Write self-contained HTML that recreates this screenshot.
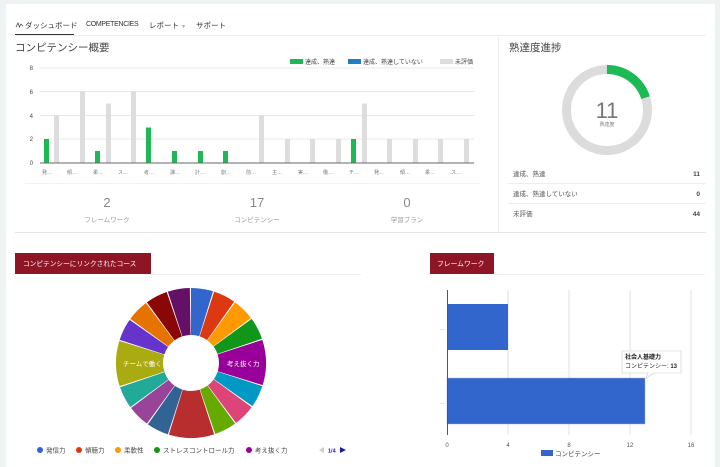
<!DOCTYPE html>
<html><head><meta charset="utf-8">
<style>
*{margin:0;padding:0;box-sizing:border-box}
body{width:720px;height:467px;background:#eef2f3;font-family:"Liberation Sans","Noto Sans CJK JP",sans-serif;position:relative;overflow:hidden;color:#333}
.card{position:absolute;left:6px;top:4px;width:709px;height:463px;background:#fff}
.a{position:absolute;white-space:nowrap}
svg{position:absolute;left:0;top:0}
</style></head><body>
<div class="card"></div>
<div class="a" style="left:25px;top:20px;font-size:7.5px;color:#333">ダッシュボード</div>
<div class="a" style="left:86px;top:21px;font-size:7px;color:#333;letter-spacing:-0.3px">COMPETENCIES</div>
<div class="a" style="left:149px;top:20px;font-size:7.5px;color:#333">レポート <span style="color:#aaa;font-size:5px">▼</span></div>
<div class="a" style="left:196px;top:20px;font-size:7.5px;color:#333">サポート</div>
<div class="a" style="left:15px;top:40px;font-size:10.5px;color:#444">コンピテンシー概要</div>
<div class="a" style="left:509px;top:40px;font-size:10.5px;color:#444">熟達度進捗</div>
<svg width="720" height="467" xmlns="http://www.w3.org/2000/svg" font-family="Liberation Sans, Noto Sans CJK JP, sans-serif">
<path d="M16,27 L18,23 L19.5,27 L21,24 L23,26" fill="none" stroke="#444" stroke-width="0.8"/>
<rect x="15" y="34" width="59" height="1.5" fill="#333"/>
<line x1="15" y1="35.5" x2="706" y2="35.5" stroke="#eee"/>
<line x1="498.5" y1="36" x2="498.5" y2="232" stroke="#eee"/>
<line x1="15" y1="232.5" x2="706" y2="232.5" stroke="#e6e6e6"/>
<rect x="290" y="59" width="13" height="5" fill="#1db954"/><text x="305" y="64" font-size="6" fill="#444">達成、熟達</text>
<rect x="348" y="59" width="13" height="5" fill="#1f7fbf"/><text x="363" y="64" font-size="6" fill="#444">達成、熟達していない</text>
<rect x="440" y="59" width="13" height="5" fill="#ddd"/><text x="455" y="64" font-size="6" fill="#444">未評価</text>
<g font-size="6" fill="#444" text-anchor="end">
<text x="33" y="70">8</text><text x="33" y="94">6</text><text x="33" y="118">4</text><text x="33" y="141">2</text><text x="33" y="165">0</text></g>
<g stroke="#e8e8e8"><line x1="40" y1="68" x2="474" y2="68"/><line x1="40" y1="91.5" x2="474" y2="91.5"/><line x1="40" y1="115.5" x2="474" y2="115.5"/><line x1="40" y1="139" x2="474" y2="139"/></g>
<g fill="#ddd">
<rect x="54" y="115.5" width="5" height="47.5"/><rect x="80" y="91.5" width="5" height="71.5"/><rect x="106" y="103.5" width="5" height="59.5"/><rect x="131" y="91.5" width="5" height="71.5"/>
<rect x="259" y="115.5" width="5" height="47.5"/><rect x="285" y="139" width="5" height="24"/><rect x="310" y="139" width="5" height="24"/><rect x="336" y="139" width="5" height="24"/>
<rect x="362" y="103.5" width="5" height="59.5"/><rect x="387" y="139" width="5" height="24"/><rect x="413" y="139" width="5" height="24"/><rect x="438" y="139" width="5" height="24"/><rect x="464" y="139" width="5" height="24"/>
</g>
<g fill="#1db954">
<rect x="44" y="139" width="5" height="24"/><rect x="95" y="151" width="5" height="12"/><rect x="146" y="127.5" width="5" height="35.5"/><rect x="172" y="151" width="5" height="12"/><rect x="198" y="151" width="5" height="12"/><rect x="223" y="151" width="5" height="12"/><rect x="351" y="139" width="5" height="24"/>
</g>
<line x1="40" y1="163" x2="474" y2="163" stroke="#666"/>
<g font-size="5" fill="#777">
<text x="42" y="174">発…</text><text x="67" y="174">傾…</text><text x="93" y="174">柔…</text><text x="118" y="174">ス…</text><text x="144" y="174">考…</text><text x="170" y="174">課…</text><text x="195" y="174">計…</text><text x="221" y="174">創…</text><text x="246" y="174">前…</text><text x="272" y="174">主…</text><text x="298" y="174">実…</text><text x="323" y="174">働…</text><text x="349" y="174">チ…</text><text x="374" y="174">発…</text><text x="400" y="174">傾…</text><text x="425" y="174">柔…</text><text x="451" y="174">ス…</text></g>
<line x1="25" y1="183.5" x2="480" y2="183.5" stroke="#f2f2f2"/>
<g text-anchor="middle" fill="#888"><text x="107" y="207" font-size="13">2</text><text x="257" y="207" font-size="13">17</text><text x="407" y="207" font-size="13">0</text>
<text x="107" y="222" font-size="6.5" fill="#999">フレームワーク</text><text x="257" y="222" font-size="6.5" fill="#999">コンピテンシー</text><text x="407" y="222" font-size="6.5" fill="#999">学習プラン</text></g>
<circle cx="607" cy="110" r="40.5" fill="none" stroke="#dcdcdc" stroke-width="9"/>
<circle cx="607" cy="110" r="40.5" fill="none" stroke="#1db954" stroke-width="9" stroke-dasharray="50.9 300" transform="rotate(-90 607 110)"/>
<text x="607" y="118" font-size="22" fill="#777" text-anchor="middle">11</text>
<text x="607" y="126" font-size="5" fill="#777" text-anchor="middle">熟達度</text>
<g font-size="6.5" fill="#555"><text x="513" y="176">達成、熟達</text><text x="513" y="196">達成、熟達していない</text><text x="513" y="216">未評価</text></g>
<g font-size="6.5" fill="#444" font-weight="bold" text-anchor="end"><text x="700" y="176">11</text><text x="700" y="196">0</text><text x="700" y="216">44</text></g>
<line x1="508" y1="183.5" x2="706" y2="183.5" stroke="#eee"/><line x1="508" y1="203.5" x2="706" y2="203.5" stroke="#eee"/>
<rect x="15" y="253" width="136" height="21" fill="#8e1526"/>
<text x="23" y="266" font-size="6.7" fill="#fff">コンピテンシーにリンクされたコース</text>
<line x1="151" y1="274.5" x2="361" y2="274.5" stroke="#eee"/>
<g fill="none" stroke-width="47" transform="translate(191 363)">
<circle r="51.5" stroke="#3366cc" stroke-dasharray="15.4 400" transform="rotate(-90)"/>
<circle r="51.5" stroke="#dc3912" stroke-dasharray="15.4 400" transform="rotate(-72)"/>
<circle r="51.5" stroke="#ff9900" stroke-dasharray="15.4 400" transform="rotate(-54)"/>
<circle r="51.5" stroke="#109618" stroke-dasharray="15.4 400" transform="rotate(-36)"/>
<circle r="51.5" stroke="#990099" stroke-dasharray="31.6 400" transform="rotate(-18)"/>
<circle r="51.5" stroke="#0099c6" stroke-dasharray="15.4 400" transform="rotate(18)"/>
<circle r="51.5" stroke="#dd4477" stroke-dasharray="15.4 400" transform="rotate(36)"/>
<circle r="51.5" stroke="#66aa00" stroke-dasharray="15.4 400" transform="rotate(54)"/>
<circle r="51.5" stroke="#b82e2e" stroke-dasharray="31.6 400" transform="rotate(72)"/>
<circle r="51.5" stroke="#316395" stroke-dasharray="15.4 400" transform="rotate(108)"/>
<circle r="51.5" stroke="#994499" stroke-dasharray="15.4 400" transform="rotate(126)"/>
<circle r="51.5" stroke="#22aa99" stroke-dasharray="15.4 400" transform="rotate(144)"/>
<circle r="51.5" stroke="#aaaa11" stroke-dasharray="31.6 400" transform="rotate(162)"/>
<circle r="51.5" stroke="#6633cc" stroke-dasharray="15.4 400" transform="rotate(198)"/>
<circle r="51.5" stroke="#e67300" stroke-dasharray="15.4 400" transform="rotate(216)"/>
<circle r="51.5" stroke="#8b0707" stroke-dasharray="15.4 400" transform="rotate(234)"/>
<circle r="51.5" stroke="#651067" stroke-dasharray="15.4 400" transform="rotate(252)"/>
</g>
<text x="123" y="366" font-size="6.5" fill="#fff">チームで働く</text>
<text x="227" y="366" font-size="6.5" fill="#fff">考え抜く力</text>
<g font-size="6.5" fill="#444">
<circle cx="40" cy="450" r="3" fill="#3366cc"/><text x="46" y="452.5">発信力</text>
<circle cx="79" cy="450" r="3" fill="#dc3912"/><text x="85" y="452.5">傾聴力</text>
<circle cx="118" cy="450" r="3" fill="#ff9900"/><text x="124" y="452.5">柔軟性</text>
<circle cx="157" cy="450" r="3" fill="#109618"/><text x="163" y="452.5">ストレスコントロール力</text>
<circle cx="249" cy="450" r="3" fill="#990099"/><text x="255" y="452.5">考え抜く力</text>
</g>
<polygon points="319,450 324,447 324,453" fill="#ccc"/>
<text x="328" y="452.5" font-size="5.5" fill="#1a1aa6" font-weight="bold">1/4</text>
<polygon points="340,447 346,450 340,453" fill="#1a1aa6"/>
<rect x="430" y="253" width="64" height="21" fill="#8e1526"/>
<text x="437" y="266" font-size="6.8" fill="#fff">フレームワーク</text>
<line x1="494" y1="274.5" x2="705" y2="274.5" stroke="#eee"/>
<g stroke="#e2e2e2"><line x1="508" y1="290" x2="508" y2="435"/><line x1="569" y1="290" x2="569" y2="435"/><line x1="630" y1="290" x2="630" y2="435"/><line x1="691" y1="290" x2="691" y2="435"/></g>
<rect x="447" y="304" width="61" height="46" fill="#3366cc"/>
<rect x="447" y="378" width="198" height="46" fill="#3366cc" stroke="#aac" stroke-width="0.5"/>
<line x1="447.5" y1="290" x2="447.5" y2="435" stroke="#555"/>
<g font-size="5" fill="#888"><text x="440" y="330">…</text><text x="440" y="404">…</text></g>
<g font-size="6" fill="#555" text-anchor="middle"><text x="447" y="447">0</text><text x="508" y="447">4</text><text x="569" y="447">8</text><text x="630" y="447">12</text><text x="691" y="447">16</text></g>
<path d="M622,351 H681 V373 H654 L646,378 L648,373 H622 Z" fill="#fff" stroke="#ccc" stroke-width="0.6"/>
<text x="625" y="359" font-size="6" fill="#222" font-weight="bold">社会人基礎力</text>
<text x="625" y="368" font-size="6" fill="#222">コンピテンシー: <tspan font-weight="bold">13</tspan></text>
<rect x="541" y="450" width="12" height="6" fill="#3366cc"/>
<text x="555" y="456" font-size="6.5" fill="#444">コンピテンシー</text>
</svg>
</body></html>
